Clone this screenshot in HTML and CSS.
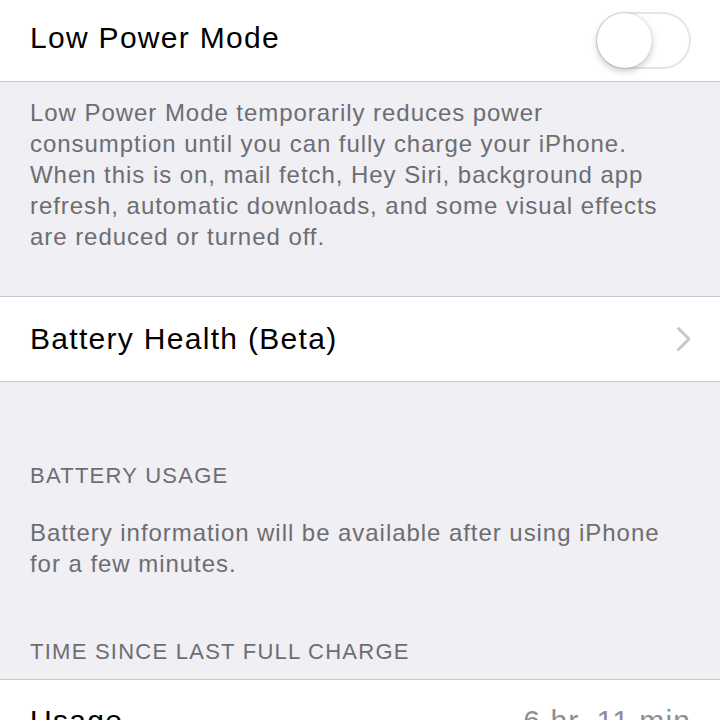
FILE: index.html
```html
<!DOCTYPE html>
<html>
<head>
<meta charset="utf-8">
<link rel="stylesheet" href="styles.css">
</head>
<body>
<div class="page">
  <div class="cell cell-top">
    <span class="label">Low Power Mode</span>
    <span class="switch"><span class="knob"></span></span>
  </div>
  <div class="footer footer-lpm">Low Power Mode temporarily reduces power<br>consumption until you can fully charge your iPhone.<br>When this is on, mail fetch, Hey Siri, background app<br>refresh, automatic downloads, and some visual effects<br>are reduced or turned off.</div>
  <div class="cell cell-health">
    <span class="label">Battery Health (Beta)</span>
    <svg class="chevron" width="16" height="26" viewBox="0 0 16 26"><path d="M2.5 2.5 L13 13 L2.5 23.5" fill="none" stroke="#c7c7cc" stroke-width="3" stroke-linecap="round" stroke-linejoin="round"/></svg>
  </div>
  <div class="header header-usage">BATTERY USAGE</div>
  <div class="footer footer-usage">Battery information will be available after using iPhone<br>for a few minutes.</div>
  <div class="header header-time">TIME SINCE LAST FULL CHARGE</div>
  <div class="cell cell-usage">
    <span class="label">Usage</span>
    <span class="value">6 hr, 11 min</span>
  </div>
</div>
</body>
</html>
```

FILE: styles.css
```css
html, body {
  margin: 0;
  padding: 0;
  background: #efeff4;
}
.page {
  width: 720px;
  height: 720px;
  overflow: hidden;
  background: #efeff4;
  font-family: "Liberation Sans", Arial, sans-serif;
}
.cell {
  background: #fff;
  display: flex;
  align-items: center;
  justify-content: space-between;
  padding: 0 30px;
  border-bottom: 1px solid #c8c7cc;
  box-sizing: border-box;
}
.cell-top {
  height: 82px;
  padding-bottom: 6px;
}
.cell-health {
  height: 86px;
  border-top: 1px solid #c8c7cc;
}
.cell-usage {
  height: 86px;
  border-top: 1px solid #c8c7cc;
  align-items: flex-start;
  padding-top: 24px;
}
.label {
  font-size: 30px;
  letter-spacing: 1.3px;
  color: #000;
}
.value {
  font-size: 30px;
  letter-spacing: 1.1px;
  color: #8e8e93;
  margin-right: -1px;
}
.switch {
  position: relative;
  width: 95px;
  height: 57px;
  border-radius: 29px;
  border: 2px solid #e5e5ea;
  box-sizing: border-box;
  background: #fff;
  margin-right: -1px;
  margin-top: 6px;
}
.knob {
  position: absolute;
  left: -1px;
  top: -1px;
  width: 55px;
  height: 55px;
  border-radius: 50%;
  background: #fff;
  box-shadow: 0 3px 7px rgba(0,0,0,0.22), 0 0 1px rgba(0,0,0,0.3);
}
.footer {
  font-size: 24px;
  line-height: 31px;
  letter-spacing: 0.95px;
  color: #6d6d72;
  padding: 0 30px;
  white-space: nowrap;
}
.footer-lpm {
  height: 214px;
  padding-top: 15px;
  box-sizing: border-box;
}
.chevron {
  margin-right: -2px;
}
.header {
  font-size: 22px;
  letter-spacing: 1.25px;
  color: #6d6d72;
  text-transform: uppercase;
  padding: 0 30px;
  line-height: 30px;
}
.header-usage {
  padding-top: 79px;
}
.footer-usage {
  padding-top: 26px;
}
.header-time {
  padding-top: 58px;
  height: 42px;
}
```
